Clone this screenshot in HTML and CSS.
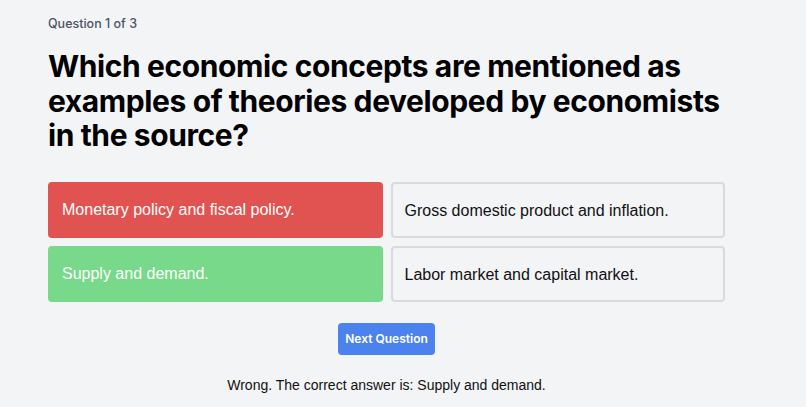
FILE: index.html
```html
<!DOCTYPE html>
<html lang="en">
<head>
<meta charset="utf-8">
<title>Quiz</title>
<link rel="stylesheet" href="styles.css">
</head>
<body>
<main class="quiz">
  <p class="progress">Question 1 of 3</p>
  <h1 class="question">Which economic concepts are mentioned as examples of theories developed by economists in the source?</h1>
  <div class="answers">
    <button class="answer wrong">Monetary policy and fiscal policy.</button>
    <button class="answer">Gross domestic product and inflation.</button>
    <button class="answer correct">Supply and demand.</button>
    <button class="answer">Labor market and capital market.</button>
  </div>
  <div class="actions">
    <button class="next">Next Question</button>
  </div>
  <p class="feedback">Wrong. The correct answer is: Supply and demand.</p>
</main>
</body>
</html>
```

FILE: styles.css
```css
html, body {
  margin: 0;
  padding: 0;
  background: #f3f4f6;
}
body {
  font-family: "Inter", "Liberation Sans", sans-serif;
  color: #111;
}
.quiz {
  width: 677px;
  margin-left: 48px;
  padding-top: 16px;
}
.progress {
  margin: 0;
  font-size: 12.5px;
  line-height: 16px;
  font-weight: 500;
  color: #4b5563;
}
.question {
  margin: 17px 0 29px;
  font-size: 30px;
  line-height: 34.5px;
  font-weight: 700;
  color: #000;
  letter-spacing: -0.4px;
}
.answers {
  display: grid;
  grid-template-columns: 1fr 1fr;
  gap: 8px;
}
.answer {
  height: 56px;
  text-align: left;
  padding: 2px 12px 0;
  font-family: "Liberation Sans", Arial, sans-serif;
  font-size: 16px;
  color: #111;
  background: #f3f4f6;
  border: 2px solid #d9dadd;
  border-radius: 4px;
}
.answer.wrong {
  background: #e05350;
  border-color: #e05350;
  color: #fff;
  padding-top: 0;
}
.answer.correct {
  background: #78d98a;
  border-color: #78d98a;
  color: #fff;
  padding-top: 0;
}
.actions {
  display: flex;
  justify-content: center;
  margin-top: 21px;
}
.next {
  height: 32px;
  padding: 0 7px;
  font-family: "Inter", "Liberation Sans", sans-serif;
  font-size: 12px;
  font-weight: 600;
  color: #fff;
  background: #4c82ee;
  border: none;
  border-radius: 4px;
}
.feedback {
  margin: 21px 0 0;
  text-align: center;
  font-family: "Liberation Sans", Arial, sans-serif;
  font-size: 14px;
  line-height: 18px;
  color: #111;
}
```
